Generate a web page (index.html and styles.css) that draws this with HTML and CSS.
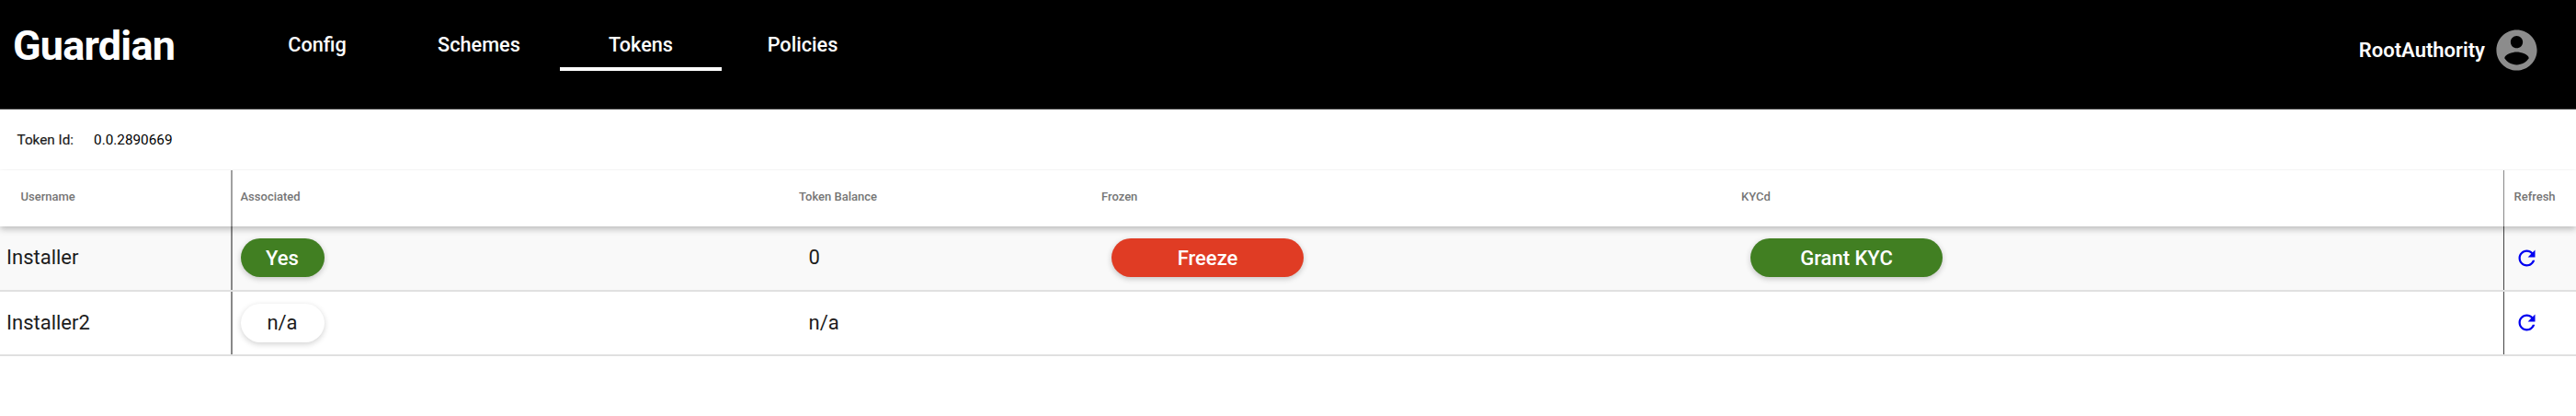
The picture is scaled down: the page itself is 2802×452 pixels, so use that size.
FILE: index.html
```html
<!DOCTYPE html>
<html lang="en">
<head>
<meta charset="utf-8">
<title>Guardian</title>
<link rel="stylesheet" href="styles.css">
</head>
<body>
<header class="topbar">
  <h1 class="brand"><span>Guardian</span></h1>
  <nav class="tabs">
    <a class="tab"><span>Config</span></a>
    <a class="tab"><span>Schemes</span></a>
    <a class="tab tab-active"><span>Tokens</span></a>
    <a class="tab"><span>Policies</span></a>
  </nav>
  <div class="account">
    <span>RootAuthority</span>
    <svg class="avatar" viewBox="0 0 24 24"><path fill="currentColor" d="M12 2C6.480 2 2 6.480 2 12s4.480 10 10 10 10-4.480 10-10S17.520 2 12 2zm0 3c1.660 0 3 1.340 3 3s-1.340 3-3 3-3-1.340-3-3 1.340-3 3-3zm0 14.200c-2.500 0-4.710-1.280-6-3.220.030-1.990 4-3.080 6-3.080 1.990 0 5.970 1.090 6 3.080-1.290 1.940-3.500 3.220-6 3.220z"/></svg>
  </div>
</header>
<div class="token-info"><span class="token-label">Token Id:</span><span class="token-value">0.0.2890669</span></div>
<main class="table">
  <div class="row row-head">
    <div class="cell cell-user"><span>Username</span></div>
    <div class="cell cell-assoc"><span>Associated</span></div>
    <div class="cell cell-balance"><span>Token Balance</span></div>
    <div class="cell cell-frozen"><span>Frozen</span></div>
    <div class="cell cell-kyc"><span>KYCd</span></div>
    <div class="cell cell-refresh"><span>Refresh</span></div>
  </div>
  <div class="row row-body row-shaded">
    <div class="cell cell-user"><span>Installer</span></div>
    <div class="cell cell-assoc"><button class="pill pill-small pill-green"><span>Yes</span></button></div>
    <div class="cell cell-balance"><span>0</span></div>
    <div class="cell cell-frozen"><button class="pill pill-red"><span>Freeze</span></button></div>
    <div class="cell cell-kyc"><button class="pill pill-green"><span>Grant KYC</span></button></div>
    <div class="cell cell-refresh"><svg class="reload" viewBox="0 0 24 24"><path fill="currentColor" d="M17.650 6.350C16.200 4.900 14.210 4 12 4c-4.420 0-7.990 3.580-7.990 8s3.570 8 7.990 8c3.730 0 6.840-2.550 7.730-6h-2.080c-.820 2.330-3.040 4-5.650 4-3.310 0-6-2.690-6-6s2.690-6 6-6c1.660 0 3.140.690 4.220 1.780L13 11h7V4l-2.350 2.350z"/></svg></div>
  </div>
  <div class="row row-body">
    <div class="cell cell-user"><span>Installer2</span></div>
    <div class="cell cell-assoc"><button class="pill pill-small pill-plain"><span>n/a</span></button></div>
    <div class="cell cell-balance"><span>n/a</span></div>
    <div class="cell cell-frozen"></div>
    <div class="cell cell-kyc"></div>
    <div class="cell cell-refresh"><svg class="reload" viewBox="0 0 24 24"><path fill="currentColor" d="M17.650 6.350C16.200 4.900 14.210 4 12 4c-4.420 0-7.990 3.580-7.990 8s3.570 8 7.990 8c3.730 0 6.840-2.550 7.730-6h-2.080c-.820 2.330-3.040 4-5.650 4-3.310 0-6-2.690-6-6s2.690-6 6-6c1.660 0 3.140.690 4.220 1.780L13 11h7V4l-2.350 2.350z"/></svg></div>
  </div>
</main>
</body>
</html>
```

FILE: styles.css
```css
* { box-sizing: border-box; }
body { margin: 0; background: #fff; color: #1c1c1c; font-family: Roboto, "Liberation Sans", sans-serif; font-size: 22px; overflow: hidden; }
.topbar { display: flex; height: 119px; background: #000; border-bottom: 1px solid #444; color: #fff; padding-left: 14px; }
.brand { width: 243px; margin: 0; padding-top: 23px; font-size: 45px; line-height: 54px; font-weight: 700; letter-spacing: -0.8px; }
.tabs { display: flex; height: 77px; }
.tab { width: 176px; padding-top: 21px; text-align: center; line-height: 55px; font-size: 21.7px; font-weight: 500; border-bottom: 4px solid transparent; }
.tab-active { border-bottom-color: #fff; }
.account { display: flex; align-items: center; gap: 8px; height: 109px; margin-left: auto; padding-right: 38px; font-size: 22px; font-weight: 600; }
.avatar { width: 53px; height: 53px; color: #8c8c8c; }
.token-info { display: flex; gap: 22px; height: 66px; padding-left: 18.500px; font-size: 15.3px; line-height: 66px; }
.token-label { -webkit-text-stroke: 0.2px; }
.token-value { color: #000; }
.row { display: flex; }
.row-head { position: relative; height: 61px; font-size: 13px; font-weight: 500; color: #757575; box-shadow: 0 3px 7px rgba(0,0,0,.25); clip-path: inset(-1px 0 -12px 0); }
.row-head .cell { padding-bottom: 4px; }
.row-body { height: 70.500px; border-bottom: 2px solid #e0e0e0; }
.row-shaded { background: #f9f9f9; }
.cell { display: flex; align-items: center; }
.row-body .cell > span { padding-bottom: 1px; }
.cell-user { width: 253px; padding-left: 7px; border-right: 2px solid #888; }
.row-head .cell-user { padding-left: 22.500px; border-right-color: #a0a0a0; }
.cell-assoc { width: 616px; padding-left: 8.500px; }
.cell-balance { width: 329px; padding-left: 10.500px; }
.cell-frozen { width: 695px; padding-left: 11px; }
.cell-kyc { width: 831px; padding-left: 11px; border-right: 1px solid #444; }
.cell-refresh { padding-left: 11px; }
.row-head .cell-balance, .row-head .cell-frozen { padding-left: 0; }
.row-head .cell-kyc { padding-left: 1px; border-right-color: #888; }
.row-head .cell-refresh { padding-left: 10.500px; }
.pill { width: 209px; height: 42px; border: 0; border-radius: 21px; padding: 0; color: #fff; font: inherit; font-weight: 500; box-shadow: 0 2px 6px rgba(0,0,0,.22); }
.pill-small { width: 91px; }
.pill-green { background: #417f22; }
.pill-red { background: #e03c24; }
.pill-plain { background: #fff; color: #1c1c1c; font-weight: 400; box-shadow: 0 2px 6px rgba(0,0,0,.18); }
.reload { width: 27px; height: 27px; color: #0000f0; }
```
